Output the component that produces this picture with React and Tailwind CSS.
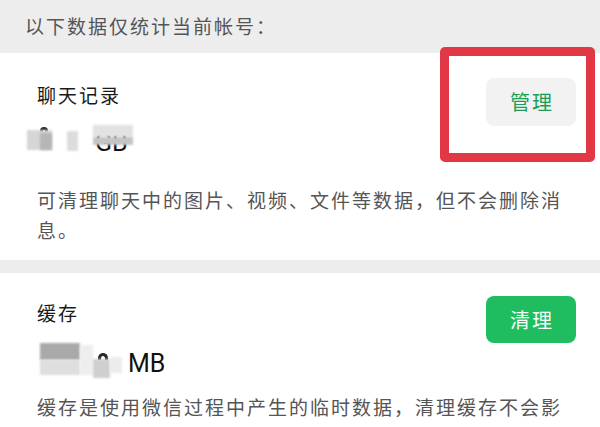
import React from "react";

const cjk = { fontFamily: '"Noto Sans CJK SC", "Noto Sans", sans-serif' };

// censor blobs laid over the size figure
function Blob({ l, t, w, h, c }) {
  return (
    <div
      className="absolute blur-[1px]"
      style={{ left: l, top: t, width: w, height: h, background: c }}
    />
  );
}

function Arc({ l, t, w }) {
  return (
    <div
      className="absolute h-[7px] border-t-[3px] border-x-[3px] border-[#2a2a2a] rounded-t-full blur-[0.4px]"
      style={{ left: l, top: t, width: w }}
    />
  );
}

function Amount({ unit, unitPl, blobs, arc, mt }) {
  return (
    <div className={`relative flex items-center h-[30px] ${mt}`}>
      <span
        className={`${unitPl} text-[25px] leading-[30px] text-[#111]`}
        style={{ fontFamily: "Roboto, sans-serif" }}
      >
        {unit}
      </span>
      {arc && <Arc {...arc} />}
      {blobs.map((b, i) => <Blob key={i} {...b} />)}
    </div>
  );
}

function Card({ title, amount, desc, button, titlePt, descMt }) {
  return (
    <div className="bg-white pl-[37px] pr-[24px]">
      <div className="flex justify-between items-start">
        <div className={titlePt}>
          <div className="text-[19px] leading-[24px] tracking-[2px] text-[#1a1a1a]">{title}</div>
          {amount}
        </div>
        {button}
      </div>
      <p className={`${descMt} text-[19px] leading-[30px] tracking-[2px] text-[#555] pb-[15px]`}>
        {desc}
      </p>
    </div>
  );
}

export default function App() {
  return (
    <div className="relative w-[600px] h-[427px] overflow-hidden bg-[#ededed]" style={cjk}>
      <div className="h-[53px] pl-[25px] flex items-center text-[19px] tracking-[2px] text-[#555]">
        以下数据仅统计当前帐号：
      </div>

      <Card
        title="聊天记录"
        titlePt="pt-[30px]"
        descMt="mt-[27px]"
        amount={
          <Amount
            mt="mt-[21px]"
            unit="GB"
            unitPl="pl-[58px]"
            arc={{ l: 3, t: -1, w: 8 }}
            blobs={[
              { l: -10, t: 2, w: 25, h: 20, c: "#d6d6d6" },
              { l: 3, t: 5, w: 12, h: 17, c: "#b6b6b6" },
              { l: 30, t: 3, w: 11, h: 20, c: "#dcdcdc" },
              { l: 56, t: -3, w: 40, h: 12, c: "#e2e2e2" },
              { l: 56, t: 9, w: 40, h: 8, c: "#c4c4c4" },
            ]}
          />
        }
        button={
          <button className="mt-[25px] w-[90px] h-[48px] rounded-[8px] bg-[#f2f2f2] text-[20px] tracking-[2px] pl-[2px] text-[#1c9e58]">
            管理
          </button>
        }
        desc="可清理聊天中的图片、视频、文件等数据，但不会删除消息。"
      />

      <div className="h-[13px]" />

      <Card
        title="缓存"
        titlePt="pt-[28px]"
        descMt="mt-[13px]"
        amount={
          <Amount
            mt="mt-[24px]"
            unit="MB"
            unitPl="pl-[91px]"
            arc={{ l: 61, t: 4, w: 10 }}
            blobs={[
              { l: 3, t: -6, w: 40, h: 17, c: "#a9a9a9" },
              { l: 3, t: 11, w: 40, h: 15, c: "#dedede" },
              { l: 43, t: -4, w: 13, h: 30, c: "#eeeeee" },
              { l: 56, t: 10, w: 17, h: 19, c: "#cfcfcf" },
              { l: 73, t: 8, w: 12, h: 16, c: "#ececec" },
            ]}
          />
        }
        button={
          <button className="mt-[23px] w-[90px] h-[47px] rounded-[8px] bg-[#20bd60] text-[20px] tracking-[2px] pl-[2px] text-[#f4fff8]">
            清理
          </button>
        }
        desc="缓存是使用微信过程中产生的临时数据，清理缓存不会影响微信的正常使用。"
      />

      {/* red highlight annotation */}
      <div className="absolute left-[440px] top-[47px] w-[155px] h-[115px] border-[9px] border-[#e23745] rounded-[5px]" />
    </div>
  );
}
